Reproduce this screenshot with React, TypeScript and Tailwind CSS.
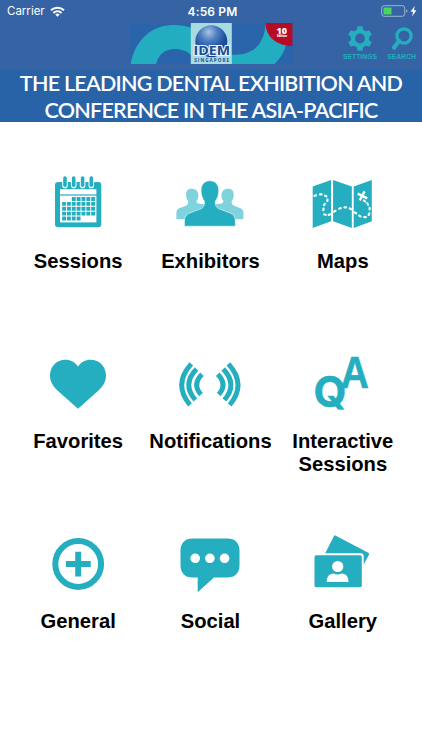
import type { FC, ReactNode } from 'react';

type Tile = {
  label: string;
  icon: ReactNode;
};

const CALENDAR_RINGS = [27, 35.7, 44.6, 53.3];

// [first column, last column] of the filled days in each week
const CALENDAR_WEEKS = [[2, 6], [0, 6], [0, 6], [0, 6], [0, 3]];

// x, y, angle for each dash of the route
const ROUTE = [
  [12.2, 30.6, -15], [17.8, 29.4, 0], [22.7, 31, 35], [24.4, 35.3, 95], [21.4, 39.5, 125],
  [20.4, 44.3, 95], [22, 49.6, 10], [26.5, 49.6, -20], [31.8, 46.2, -30], [37, 43.4, -22],
  [42.3, 42.4, 5], [47.4, 43.8, 30], [52.4, 47.8, 35], [56.8, 51, 30], [62, 52.2, 0],
  [66, 49.2, -65], [66.6, 43.6, 85], [64.7, 39, 60], [61.5, 36, 40],
];

const SessionsIcon: FC = () => (
  <>
    <rect x="17" y="17" width="46.3" height="45.3" rx="3" />
    <rect x="22" y="24.2" width="36.4" height="5.2" fill="#fff" />
    <rect x="22" y="30.6" width="36.4" height="26.8" fill="#fff" />
    {CALENDAR_RINGS.map(x => (
      <g key={x} strokeLinecap="round">
        <path d={`M${x} 17V20.4`} stroke="#fff" strokeWidth="5.6" />
        <path d={`M${x} 13V20.2`} stroke="#24aec0" strokeWidth="3.6" />
      </g>
    ))}
    {CALENDAR_WEEKS.map(([from, to], week) =>
      Array.from({ length: to - from + 1 }, (_, i) => (
        <rect key={`${week}-${i}`} x={24.1 + (from + i) * 4.85} y={32.1 + week * 4.85} width="3.9" height="3.9" rx="0.5" />
      ))
    )}
  </>
);

const ExhibitorsIcon: FC = () => (
  <>
    <g fill="#7fd3dc">
      <path d="M21.2 23.8c-3.4 0-5.4 2.7-5.1 6.600.2 2.600.9 4.200 2 5.600.4 2.400-.6 4-3 5l-5.200 2c-2.600 1-3.500 2.600-3.500 5v6.200h34V40l-11-1.300c-2-.7-3.200-1.200-3-2.700 1.300-1.400 2-3.400 2-5.600.2-3.900-2.500-6.600-7.200-6.600z" />
      <path d="M58.600 23.800c3.400 0 5.400 2.700 5.100 6.600-.2 2.600-.9 4.200-2 5.600-.4 2.400.6 4 3 5l5.200 2c2.600 1 3.500 2.600 3.500 5v6.200h-34V40l11-1.300c2-.7 3.200-1.200 3-2.700-1.300-1.400-2-3.400-2-5.600-.2-3.900 2.500-6.600 7.200-6.600z" />
    </g>
    <path
      stroke="#fff"
      strokeWidth="0.5"
      d="M39.900 15.800c-5.900 0-9.100 4.600-8.800 10.500.2 4.300 1.600 7.600 3.300 9.800.6 4.600-1.100 6.900-4.400 8.100l-10 3.700c-3.800 1.500-5.500 4.200-5.500 8.100v5.200h50.800v-5.200c0-3.900-1.700-6.600-5.500-8.100l-10-3.700c-3.300-1.200-5-3.500-4.400-8.100 1.700-2.200 3.100-5.500 3.300-9.800.3-5.900-2.900-10.500-8.800-10.500z"
    />
  </>
);

const MapsIcon: FC = () => (
  <>
    <path d="M9.700 21.500L28 15v41.200L9.700 63zM30.100 15l18.700 6.500V63l-18.700-6.800zM50.700 21.500L68.800 15v41.200L50.700 63z" />
    <g stroke="#fff">
      {ROUTE.map(([x, y, angle]) => (
        <path key={`${x}-${y}`} d="M-.8 0H.8" strokeWidth="2.200" strokeLinecap="round" transform={`translate(${x} ${y}) rotate(${angle})`} />
      ))}
      <path d="M54.600 28.600l9.600 4.800M61.600 26.400l-4.900 9" strokeWidth="2.300" />
    </g>
  </>
);

const FavoritesIcon: FC = () => (
  <path d="M40 63.700L19.500 45.500C14.600 41 12 36.500 12 30.600c0-9.200 6.800-15.900 15.200-15.900 5.600 0 10 2.200 12.800 7 2.800-4.800 7.200-7 12.800-7C61.200 14.700 68 21.400 68 30.600c0 5.900-2.600 10.400-7.500 14.900z" />
);

const WaveArcs: FC = () => (
  <>
    <path d="M21.300 18.800Q2.700 39.300 20 60" />
    <path d="M26.500 24Q11.700 39.300 25.300 55" />
    <path d="M32 29.200Q21.800 39.300 31 49.500" />
  </>
);

const NotificationsIcon: FC = () => (
  <g fill="none" stroke="#24aec0" strokeWidth="4.900">
    <WaveArcs />
    <g transform="translate(79.700 0) scale(-1 1)">
      <WaveArcs />
    </g>
  </g>
);

const InteractiveIcon: FC = () => (
  <g className="font-bold" stroke="#24aec0" strokeWidth="0.500">
    <text x="10.500" y="61.800" fontSize="42.500" textLength="33" lengthAdjust="spacingAndGlyphs" className="font-[Inter]">Q</text>
    <text x="37.500" y="43.200" fontSize="44" textLength="28.500" lengthAdjust="spacingAndGlyphs" className="font-['Liberation_Sans']">A</text>
  </g>
);

const GeneralIcon: FC = () => (
  <>
    <circle cx="40.200" cy="39" r="22.900" fill="none" stroke="#24aec0" strokeWidth="6" />
    <path d="M27.900 39h24.800M40.200 26.800v24.600" stroke="#24aec0" strokeWidth="6" />
  </>
);

const SocialIcon: FC = () => (
  <>
    <path d="M22.500 13.500h35c7.500 0 12 4.500 12 12v15c0 7.500-4.500 12-12 12H44L27.700 67.300V52.500h-5.200c-7.500 0-12-4.500-12-12v-15c0-7.500 4.500-12 12-12z" />
    <g fill="#fff">
      <circle cx="25.200" cy="33.300" r="4.800" />
      <circle cx="39.900" cy="33.300" r="4.800" />
      <circle cx="54.600" cy="33.300" r="4.800" />
    </g>
  </>
);

const GalleryIcon: FC = () => (
  <>
    <path d="M32.400 10.500l32.800 17.300q1.500.8.700 2.300l-5.200 9.300L20 32.500l11-21.400q.5-1.100 1.400-.6z" />
    <rect x="10" y="28.200" width="50.700" height="36" rx="3" fill="#fff" />
    <rect x="11.500" y="30.200" width="47.300" height="32" rx="1.700" />
    <g fill="#fff">
      <circle cx="34.700" cy="41.500" r="5.600" />
      <path d="M23.700 57c0-5.300 2.500-8.200 7-8.400 2.300 1.200 5.600 1.200 8 0 4.500.2 6.800 3.100 6.800 8.400z" />
    </g>
  </>
);

const tiles: Tile[] = [
  { label: 'Sessions', icon: <SessionsIcon /> },
  { label: 'Exhibitors', icon: <ExhibitorsIcon /> },
  { label: 'Maps', icon: <MapsIcon /> },
  { label: 'Favorites', icon: <FavoritesIcon /> },
  { label: 'Notifications', icon: <NotificationsIcon /> },
  { label: 'Interactive Sessions', icon: <InteractiveIcon /> },
  { label: 'General', icon: <GeneralIcon /> },
  { label: 'Social', icon: <SocialIcon /> },
  { label: 'Gallery', icon: <GalleryIcon /> },
];

const StatusBar: FC = () => (
  <div className="grid h-[23px] grid-cols-3 items-center pr-1 pl-[7px] font-[Inter] text-[11.500px] text-white">
    <div className="flex items-center gap-[5px]">
      <span>Carrier</span>
      <svg width="15" height="11" viewBox="0 0 15 11" fill="none" stroke="currentColor" strokeWidth="2">
        <path d="M1 4.300a9.400 9.400 0 0 1 13 0M3.400 6.900a6 6 0 0 1 8.200 0" />
        <path d="M7.500 10.800L5.300 8.600a3.200 3.200 0 0 1 4.400 0z" fill="currentColor" stroke="none" />
      </svg>
    </div>
    <span className="pt-px text-center text-[12px] font-semibold tracking-[0.150px]">4:56 PM</span>
    <svg className="justify-self-end" width="37" height="13" viewBox="0 0 37 13">
      <rect x="0.700" y="0.700" width="23" height="10.600" rx="2.500" fill="none" stroke="#9db5d5" />
      <rect x="2.500" y="2.500" width="8" height="7" rx="0.500" fill="#48d75a" />
      <path d="M25.200 4.400v3.200q1.300-.4 1.300-1.600t-1.300-1.600z" fill="#9db5d5" />
      <path d="M33.700 1L29.500 6.800h2.600l-.9 4.600 4.200-6.100h-2.500z" fill="#fff" />
    </svg>
  </div>
);

const Logo: FC = () => (
  <svg width="163" height="41" viewBox="0 0 163 41">
    <defs>
      <radialGradient id="globe" cx="0.420" cy="0.220" r="0.750">
        <stop offset="0" stopColor="#a9c5e5" />
        <stop offset="0.350" stopColor="#4f7fc0" />
        <stop offset="0.750" stopColor="#1d4c9c" />
        <stop offset="1" stopColor="#173f8d" />
      </radialGradient>
    </defs>
    <rect width="163" height="41" fill="#2a64ab" />
    <path d="M.7 41C5 17 22 2 43 2c8 0 14 1 19 3v28c-5-5-10-7-17-7-10 0-16 5-19 15z" fill="#23adc0" />
    <path d="M101 31.500c22 2 34-11 34.500-31.500l21 20c-2 9-6 15-12 21H101z" fill="#23adc0" />
    <path d="M135.500 0h27v23c-15 0-27-9-27-23z" fill="#b50b27" />
    <g fill="#fff" textAnchor="middle" className="font-['Open_Sans'] font-extrabold">
      <text x="151.800" y="11" fontSize="9" textLength="10.500" lengthAdjust="spacingAndGlyphs">10</text>
      <text x="152" y="14" fontSize="3" textLength="10">Edition</text>
    </g>
    <rect x="60.800" width="41" height="41" fill="#a9dce1" />
    <circle cx="81.300" cy="18.200" r="16" fill="url(#globe)" />
    <g fill="#1d4b95" className="font-['Open_Sans'] font-bold">
      <text x="63.500" y="32" fontSize="12" textLength="36.500" lengthAdjust="spacingAndGlyphs" stroke="#e3f2f8" strokeWidth="2.200" paintOrder="stroke">IDEM</text>
      <text x="64.200" y="39" fontSize="4.600" textLength="35">SINGAPORE</text>
    </g>
  </svg>
);

const GearIcon: FC = () => (
  <svg width="24" height="25" viewBox="0 0 24 25">
    <path d="M12 3.200a9.300 9.300 0 1 0 0 18.600 9.300 9.300 0 0 0 0-18.600zm0 4.400a4.900 4.900 0 1 1 0 9.800 4.900 4.900 0 0 1 0-9.800z" fill="#24aec0" />
    {[0, 60, 120, 180, 240, 300].map(angle => (
      <path key={angle} d="M8.600 5L9.400.9Q9.500.3 10 .3h4q.5 0 .6.600L15.400 5z" fill="#24aec0" transform={`rotate(${angle} 12 12.500)`} />
    ))}
  </svg>
);

const SearchIcon: FC = () => (
  <svg width="24" height="25" viewBox="0 0 24 25" fill="none" stroke="#24aec0">
    <circle cx="14" cy="10" r="7.100" strokeWidth="3.200" />
    <path d="M9.200 14.800L4 21.600" strokeWidth="4.200" strokeLinecap="round" />
  </svg>
);

const App: FC = () => {
  return (
    <div className="min-h-[750px] w-[422px] bg-white">
      <header className="h-[70px] bg-[#3663a3]">
        <StatusBar />
        <div className="flex pl-[130px]">
          <Logo />
          <div className="flex gap-[11px] pt-[3px] pl-[51px] font-['Liberation_Sans'] text-[6.800px] leading-[9px] font-bold text-[#24aec0]">
            <button className="flex w-[32px] flex-col items-center gap-px">
              <GearIcon />
              <span>SETTINGS</span>
            </button>
            <button className="flex w-[29px] flex-col items-center gap-px">
              <SearchIcon />
              <span>SEARCH</span>
            </button>
          </div>
        </div>
      </header>

      <h1 className="h-[52px] bg-[#2963a7] text-center font-[Lato] text-[21.500px] leading-[26.500px] font-semibold tracking-[-0.750px] whitespace-nowrap text-white">
        THE LEADING DENTAL EXHIBITION AND
        <br />
        CONFERENCE IN THE ASIA-PACIFIC
      </h1>

      <main className="grid auto-rows-[180px] grid-cols-3 pt-[43px] pr-[13px] pl-[12px]">
        {tiles.map(({ label, icon }) => (
          <button key={label} className="flex flex-col items-center">
            <svg className="shrink-0" width="80" height="75" viewBox="0 0 80 75" fill="#24aec0">
              {icon}
            </svg>
            <span className="mt-[10px] w-[126px] text-center font-['Liberation_Sans'] text-[20.200px] leading-[22.500px] font-bold text-black">
              {label}
            </span>
          </button>
        ))}
      </main>
    </div>
  );
};

export default App;
